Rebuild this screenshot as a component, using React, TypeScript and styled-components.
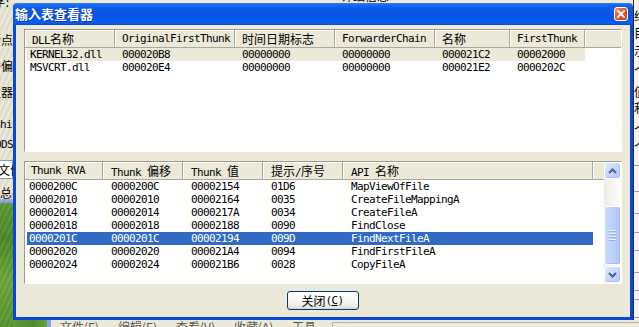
import React from "react";
import styled, { createGlobalStyle } from "styled-components";

const MONO = `"DejaVu Sans Mono", "Noto Sans CJK SC", monospace`;
const CJK = `"Noto Sans CJK SC", "Noto Sans", sans-serif`;

const Global = createGlobalStyle`
  html, body { margin: 0; padding: 0; background: #ECE9D8; }
  body { width: 639px; height: 327px; overflow: hidden; }
  * { box-sizing: border-box; }
`;

const Desktop = styled.div`
  display: grid;
  grid-template-columns: 13px 620px 6px;
  grid-template-rows: 3px 317px 7px;
  width: 639px;
  height: 327px;
  overflow: hidden;
  background: #ECE9D8;
`;

/* ---------- background fragments ---------- */
const LeftStrip = styled.div`
  grid-column: 1;
  grid-row: 1 / 4;
  display: flex;
  flex-direction: column;
  overflow: hidden;
  background:
    repeating-linear-gradient(115deg, rgba(255,255,255,0.06) 0 2px, rgba(0,0,0,0.05) 2px 5px),
    linear-gradient(to bottom, #ECE9D8 0, #ECE9D8 199px, #A9B9EA 199px, #7B94DD 203px, #5E9A35 203px, #4C8A2A 240px, #6DA83C 280px, #58952F 327px);
`;

const Frag = styled.div<{ $mt: number; $end?: boolean; $ml?: number; $pr?: number }>`
  flex: none;
  height: 12px;
  margin-top: ${(p) => p.$mt}px;
  margin-left: ${(p) => p.$ml ?? 0}px;
  padding-right: ${(p) => p.$pr ?? 0}px;
  display: flex;
  justify-content: ${(p) => (p.$end ? "flex-end" : "flex-start")};
  font: 12px ${CJK};
  line-height: 12px;
  white-space: nowrap;
  color: #000;
  overflow: visible;
`;

const MonoFrag = styled(Frag)`
  font: 11px ${MONO};
  letter-spacing: -0.62px;
`;

const FileBox = styled.div`
  flex: none;
  height: 19px;
  margin-top: 10px;
  margin-left: -4px;
  width: 17px;
  border: 1px solid #7F9DB9;
  background: #fff;
  font: 12px ${CJK};
  line-height: 17px;
  white-space: nowrap;
  padding-left: 1px;
`;

const TopStrip = styled.div`
  grid-column: 2;
  grid-row: 1;
  display: flex;
  overflow: hidden;
  background: #ECE9D8;
`;

const TopGlyphs = styled.div`
  margin-left: 328px;
  margin-top: -10px;
  font: 12px ${CJK};
  line-height: 12px;
  white-space: nowrap;
  color: #000;
`;

const RightStrip = styled.div`
  grid-column: 3;
  grid-row: 1 / 4;
  display: flex;
  flex-direction: column;
  overflow: hidden;
  background: #F4F3EE;
  border-left: 1px solid #2A2A2A;
`;

const RightLine = styled.div<{ $mt: number; $c?: string }>`
  flex: none;
  height: 1px;
  margin-top: ${(p) => p.$mt}px;
  background: ${(p) => p.$c ?? "#8FA6D6"};
`;

const BottomStrip = styled.div`
  grid-column: 2 / 4;
  grid-row: 3;
  display: flex;
  overflow: hidden;
`;

const Grass = styled.div`
  flex: none;
  width: 34px;
  background: linear-gradient(100deg, #5E9A35, #4D8B2B 60%, #6AA53C);
`;

const BlueBar = styled.div`
  flex: none;
  width: 4px;
  background: #8AA4EC;
`;

const MenuArea = styled.div`
  flex: 1;
  display: flex;
  background: #ECE9D8;
  padding-left: 9px;
  padding-top: 1px;
`;

const MenuItem = styled.div<{ $w: number }>`
  flex: none;
  width: ${(p) => p.$w}px;
  font: 12px ${CJK};
  line-height: 12px;
  color: #5A5A5A;
  white-space: nowrap;
`;

const MenuPanel = styled.div`
  flex: 1;
  margin-top: 1px;
  border-top: 1px solid #B5B2A4;
  border-left: 1px solid #B5B2A4;
`;

/* ---------- dialog ---------- */
const Dialog = styled.div`
  grid-column: 2;
  grid-row: 2;
  display: flex;
  flex-direction: column;
  border-radius: 4px 4px 0 0;
  overflow: hidden;
`;

const TitleBar = styled.div`
  flex: none;
  height: 22px;
  display: flex;
  align-items: center;
  padding: 0 5px 0 2px;
  background: linear-gradient(
    to bottom,
    #2F7CF5 0%,
    #1569EE 10%,
    #0A5BE6 25%,
    #0755E2 55%,
    #0759E8 75%,
    #0A5EEC 88%,
    #0850D6 100%
  );
`;

const Title = styled.span`
  flex: 1;
  font: bold 13px ${CJK};
  line-height: 22px;
  color: #fff;
  text-shadow: 1px 1px 0 rgba(10, 24, 131, 0.55);
  letter-spacing: 0;
`;

const Frame = styled.div`
  flex: 1;
  display: flex;
  flex-direction: column;
  background: #ECE9D8;
  border: 3px solid #0A46DA;
  border-top: none;
  padding: 4px 8px 7px 8px;
`;

const ListView = styled.div<{ $mt?: number }>`
  flex: none;
  height: 123px;
  margin-top: ${(p) => p.$mt ?? 0}px;
  display: flex;
  background: #fff;
  border: 1px solid;
  border-color: #9D9A8C #fff #fff #9D9A8C;
  overflow: hidden;
`;

const ListMain = styled.div`
  flex: 1;
  min-width: 0;
  display: flex;
  flex-direction: column;
`;

const Header = styled.div`
  flex: none;
  display: flex;
  height: 18px;
  background: #ECE9D8;
  border-bottom: 1px solid #ACA899;
  font: 11px ${MONO};
  letter-spacing: -0.62px;
  line-height: 17px;
  color: #000;
`;

const HeadCell = styled.div<{ $w: number; $p: number }>`
  flex: none;
  width: ${(p) => p.$w}px;
  padding-left: ${(p) => p.$p}px;
  white-space: nowrap;
  overflow: hidden;
  border-right: 1px solid #ACA899;
  box-shadow: inset 1px 1px 0 #fff;
`;

const HeadFill = styled.div`
  flex: 1;
  box-shadow: inset 1px 1px 0 #fff;
`;

const Row = styled.div<{ $sel?: "dim" | "active" }>`
  flex: none;
  display: flex;
  width: max-content;
  height: 13px;
  margin-left: 2px;
  font: 11px ${MONO};
  letter-spacing: -0.62px;
  line-height: 13px;
  background: ${(p) =>
    p.$sel === "active" ? "#316AC5" : p.$sel === "dim" ? "#ECE9D8" : "transparent"};
  color: ${(p) => (p.$sel === "active" ? "#fff" : "#000")};
`;

const Cell = styled.div<{ $w: number; $p: number }>`
  flex: none;
  width: ${(p) => p.$w}px;
  padding-left: ${(p) => p.$p}px;
  white-space: nowrap;
  overflow: hidden;
`;

const Zh = styled.span`
  font: 12px ${CJK};
  letter-spacing: 0;
  line-height: inherit;
`;

/* ---------- scrollbar ---------- */
const ScrollBar = styled.div`
  flex: none;
  width: 17px;
  display: flex;
  flex-direction: column;
  background: linear-gradient(to right, #EEEDE5, #FDFDFA);
`;

const ScrollBtn = styled.div`
  flex: none;
  height: 17px;
  border: 1px solid #fff;
  border-radius: 3px;
  background: linear-gradient(135deg, #E1EAFE 0%, #C6D6FB 50%, #B4C8F6 100%);
  box-shadow: inset -1px -1px 0 #AFC3F2;
  display: flex;
  align-items: center;
  justify-content: center;
`;

const Track = styled.div<{ $h: number }>`
  flex: none;
  height: ${(p) => p.$h}px;
`;

const Thumb = styled.div`
  flex: none;
  height: 59px;
  border: 1px solid #fff;
  border-radius: 3px;
  background: linear-gradient(to right, #C9D8FC 0%, #BDD0FA 50%, #B1C6F6 100%);
  box-shadow: inset -1px -1px 0 #A8BEF1;
  display: flex;
  flex-direction: column;
  align-items: center;
  justify-content: center;
  gap: 1px;
`;

const Grip = styled.span`
  display: block;
  width: 7px;
  height: 1px;
  background: #EEF4FE;
  box-shadow: 0 1px 0 #8CB0F8;
  margin-bottom: 1px;
`;

/* ---------- footer ---------- */
const Footer = styled.div`
  flex: none;
  display: flex;
  justify-content: center;
  margin-top: 7px;
`;

const Button = styled.button`
  width: 72px;
  height: 19px;
  margin-left: -1px;
  padding: 0;
  border: 1px solid #003C74;
  border-radius: 3px;
  background: linear-gradient(to bottom, #FFFFFF 0%, #F6F5F1 60%, #E9E7DF 88%, #D8D3C7 100%);
  font: 11px ${MONO};
  letter-spacing: -0.62px;
  line-height: 17px;
  color: #000;
  display: flex;
  align-items: center;
  justify-content: center;
`;

const U = styled.span`
  text-decoration: underline;
  text-underline-offset: 1px;
`;

type Col = { w: number; p: number };

const upperHead: Col[] = [
  { w: 90, p: 7 },
  { w: 120, p: 7 },
  { w: 100, p: 7 },
  { w: 100, p: 7 },
  { w: 75, p: 7 },
  { w: 75, p: 7 },
];
const upperCols: Col[] = [
  { w: 88, p: 3 },
  { w: 120, p: 7 },
  { w: 100, p: 7 },
  { w: 100, p: 7 },
  { w: 75, p: 7 },
  { w: 75, p: 7 },
];
const lowerHead: Col[] = [
  { w: 78, p: 6 },
  { w: 80, p: 8 },
  { w: 80, p: 8 },
  { w: 80, p: 8 },
  { w: 250, p: 8 },
];
const lowerCols: Col[] = [
  { w: 76, p: 2 },
  { w: 80, p: 8 },
  { w: 80, p: 8 },
  { w: 80, p: 8 },
  { w: 250, p: 8 },
];

const upperTitles = ["DLL名称", "OriginalFirstThunk", "时间日期标志", "ForwarderChain", "名称", "FirstThunk"];
const upperRows: { sel?: "dim" | "active"; cells: string[] }[] = [
  { sel: "dim", cells: ["KERNEL32.dll", "000020B8", "00000000", "00000000", "000021C2", "00002000"] },
  { cells: ["MSVCRT.dll", "000020E4", "00000000", "00000000", "000021E2", "0000202C"] },
];

const lowerTitles = ["Thunk RVA", "Thunk 偏移", "Thunk 值", "提示/序号", "API 名称"];
const lowerRows: { sel?: "dim" | "active"; cells: string[] }[] = [
  { cells: ["0000200C", "0000200C", "00002154", "01D6", "MapViewOfFile"] },
  { cells: ["00002010", "00002010", "00002164", "0035", "CreateFileMappingA"] },
  { cells: ["00002014", "00002014", "0000217A", "0034", "CreateFileA"] },
  { cells: ["00002018", "00002018", "00002188", "0090", "FindClose"] },
  { sel: "active", cells: ["0000201C", "0000201C", "00002194", "009D", "FindNextFileA"] },
  { cells: ["00002020", "00002020", "000021A4", "0094", "FindFirstFileA"] },
  { cells: ["00002024", "00002024", "000021B6", "0028", "CopyFileA"] },
];

function mix(text: string) {
  const parts = text.split(/([\u3000-\u9fff\uff00-\uffef]+)/).filter(Boolean);
  return parts.map((t, i) =>
    /[\u3000-\u9fff\uff00-\uffef]/.test(t) ? <Zh key={i}>{t}</Zh> : <React.Fragment key={i}>{t}</React.Fragment>
  );
}

const Arrow = ({ down }: { down?: boolean }) => (
  <svg width="9" height="6" viewBox="0 0 9 6">
    <polyline
      points={down ? "1,1 4.5,4.5 8,1" : "1,5 4.5,1.5 8,5"}
      fill="none"
      stroke="#4D6185"
      strokeWidth="2"
    />
  </svg>
);

const CloseIcon = () => (
  <svg width="14" height="14" viewBox="0 0 14 14">
    <defs>
      <linearGradient id="cg" x1="0" y1="0" x2="1" y2="1">
        <stop offset="0" stopColor="#F29A77" />
        <stop offset="0.45" stopColor="#E35A30" />
        <stop offset="1" stopColor="#C73C1B" />
      </linearGradient>
    </defs>
    <rect x="0.5" y="0.5" width="13" height="13" rx="2.5" fill="url(#cg)" stroke="#fff" />
    <path d="M4 4 L10 10 M10 4 L4 10" stroke="#fff" strokeWidth="1.8" strokeLinecap="square" />
  </svg>
);

const rightGlyphs: { mt: number; t: string }[] = [
  { mt: 10, t: "结" },
  { mt: 5, t: "目" },
  { mt: 6, t: "示" },
  { mt: 8, t: "个" },
  { mt: 9, t: "值" },
  { mt: 4, t: "利" },
  { mt: 10, t: "个" },
  { mt: 5, t: "个" },
];

export default function App() {
  return (
    <>
      <Global />
      <Desktop>
        <LeftStrip>
          <Frag $mt={-4} $end $pr={4}>文字:</Frag>
          <Frag $mt={26} $end>断点</Frag>
          <Frag $mt={14} $end>件偏</Frag>
          <Frag $mt={14} $end>生器</Frag>
          <MonoFrag $mt={20} $ml={-6}>Shift</MonoFrag>
          <MonoFrag $mt={8} $ml={-5}>ODS</MonoFrag>
          <FileBox>文件</FileBox>
          <Frag $mt={8}>总在</Frag>
        </LeftStrip>

        <TopStrip>
          <TopGlyphs>详细信息</TopGlyphs>
        </TopStrip>

        <Dialog>
          <TitleBar>
            <Title>输入表查看器</Title>
            <CloseIcon />
          </TitleBar>
          <Frame>
            <ListView>
              <ListMain>
                <Header>
                  {upperHead.map((c, i) => (
                    <HeadCell key={i} $w={c.w} $p={c.p}>
                      {mix(upperTitles[i])}
                    </HeadCell>
                  ))}
                  <HeadFill />
                </Header>
                {upperRows.map((r, ri) => (
                  <Row key={ri} $sel={r.sel}>
                    {upperCols.map((c, i) => (
                      <Cell key={i} $w={c.w} $p={c.p}>
                        {r.cells[i]}
                      </Cell>
                    ))}
                  </Row>
                ))}
              </ListMain>
            </ListView>

            <ListView $mt={9}>
              <ListMain>
                <Header>
                  {lowerHead.map((c, i) => (
                    <HeadCell key={i} $w={c.w} $p={c.p}>
                      {mix(lowerTitles[i])}
                    </HeadCell>
                  ))}
                  <HeadFill />
                </Header>
                {lowerRows.map((r, ri) => (
                  <Row key={ri} $sel={r.sel}>
                    {lowerCols.map((c, i) => (
                      <Cell key={i} $w={c.w} $p={c.p}>
                        {r.cells[i]}
                      </Cell>
                    ))}
                  </Row>
                ))}
              </ListMain>
              <ScrollBar>
                <ScrollBtn>
                  <Arrow />
                </ScrollBtn>
                <Track $h={27} />
                <Thumb>
                  <Grip />
                  <Grip />
                  <Grip />
                  <Grip />
                </Thumb>
                <Track $h={1} />
                <ScrollBtn>
                  <Arrow down />
                </ScrollBtn>
              </ScrollBar>
            </ListView>

            <Footer>
              <Button type="button">
                <Zh>关闭</Zh>(<U>C</U>)
              </Button>
            </Footer>
          </Frame>
        </Dialog>

        <RightStrip>
          {rightGlyphs.map((g, i) => (
            <Frag key={i} $mt={g.mt}>
              {g.t}
            </Frag>
          ))}
          <RightLine $mt={12} $c="#9C9A8E" />
          <RightLine $mt={25} />
          <RightLine $mt={21} />
          <RightLine $mt={18} />
          <RightLine $mt={17} />
          <RightLine $mt={21} />
          <RightLine $mt={17} />
          <RightLine $mt={8} />
          <RightLine $mt={17} />
        </RightStrip>

        <BottomStrip>
          <Grass />
          <BlueBar />
          <MenuArea>
            <MenuItem $w={58}>文件(F)</MenuItem>
            <MenuItem $w={58}>编辑(E)</MenuItem>
            <MenuItem $w={58}>查看(V)</MenuItem>
            <MenuItem $w={58}>收藏(A)</MenuItem>
            <MenuItem $w={40}>工具</MenuItem>
            <MenuPanel />
          </MenuArea>
        </BottomStrip>
      </Desktop>
    </>
  );
}
